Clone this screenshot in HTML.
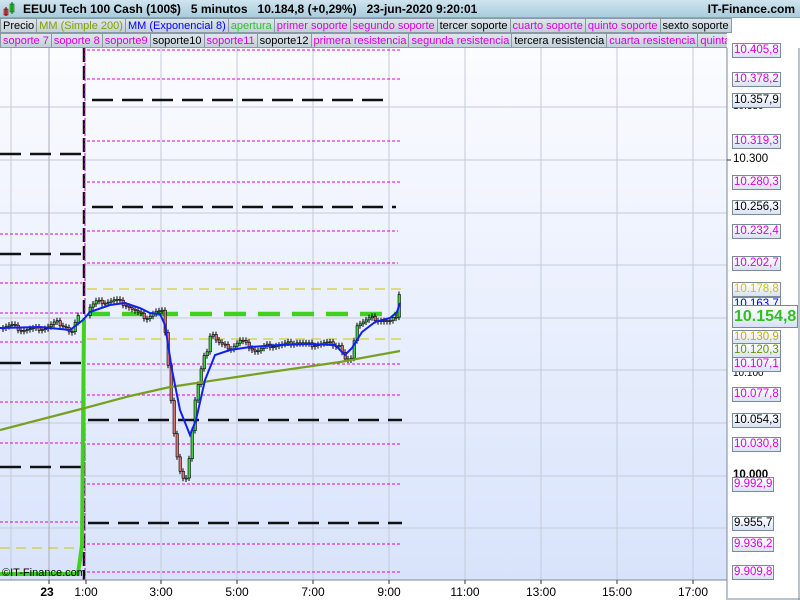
<!DOCTYPE html>
<html><head><meta charset="utf-8"><style>
*{margin:0;padding:0;box-sizing:border-box}
body{width:800px;height:600px;overflow:hidden;background:#fff;font-family:"Liberation Sans",sans-serif;position:relative}
#hdr{position:absolute;left:0;top:0;width:800px;height:18px;background:linear-gradient(#cfe4ee,#a9ccdc);border-bottom:1px solid #8aa;font-weight:bold;font-size:12px;line-height:18px}
.row{position:absolute;left:0;height:15px;display:flex;font-size:11px;line-height:14px}
.row span{background:linear-gradient(#dde6ec,#c3d0d8);border:1px solid #8a9aa4;border-left:none;padding:0 2px;white-space:nowrap}
.m{color:#e000e0}.k{color:#000}
.lab{position:absolute;left:732px;height:15px;border:1px solid #7a8a96;background:linear-gradient(#fff,#d8e2f4);font-size:11.5px;line-height:13px;padding:0 1px;white-space:nowrap}
.ax{position:absolute;font-size:11.5px}
.bt{position:absolute;top:585px;font-size:12px;transform:translateX(-50%)}
</style></head><body>
<div id="hdr"><svg style="position:absolute;left:3px;top:2px" width="14" height="14"><rect x="1" y="7" width="4" height="6" fill="#e06060" stroke="#600" stroke-width=".6"/><line x1="3" y1="5" x2="3" y2="14" stroke="#600"/><rect x="7" y="2" width="4" height="8" fill="#40d040" stroke="#060" stroke-width=".6"/><line x1="9" y1="0" x2="9" y2="12" stroke="#060"/></svg>
<span style="position:absolute;left:23px">EEUU Tech 100 Cash (100$)&nbsp;&nbsp; 5 minutos&nbsp;&nbsp; 10.184,8 (+0,29%)&nbsp;&nbsp; 23-jun-2020 9:20:01</span>
<span style="position:absolute;right:5px">IT-Finance.com</span></div>
<div class="row" style="top:18px"><span class="k" style="border-left:1px solid #8a9aa4">Precio</span><span style="color:#80a000">MM (Simple 200)</span><span style="color:#0000ff">MM (Exponencial 8)</span><span style="color:#30c030">apertura</span><span class="m">primer soporte</span><span class="m">segundo soporte</span><span class="k">tercer soporte</span><span class="m">cuarto soporte</span><span class="m">quinto soporte</span><span class="k">sexto soporte</span></div>
<div class="row" style="top:33px;width:727px;overflow:hidden"><span class="m" style="border-left:1px solid #8a9aa4">soporte 7</span><span class="m">soporte 8</span><span class="m">soporte9</span><span class="k">soporte10</span><span class="m">soporte11</span><span class="k">soporte12</span><span class="m">primera resistencia</span><span class="m">segunda resistencia</span><span class="k">tercera resistencia</span><span class="m">cuarta resistencia</span><span class="m">quinta resistencia</span></div>
<svg id="ch" style="position:absolute;left:0;top:48px" width="800" height="552" viewBox="0 48 800 552">
<defs><linearGradient id="bg" x1="0" y1="0" x2="0" y2="1"><stop offset="0" stop-color="#fbfcff"/><stop offset="1" stop-color="#d8e3fb"/></linearGradient></defs>
<rect x="0" y="48" width="727" height="532" fill="url(#bg)"/>
<g stroke="#c4cad8" stroke-width="1">
<line x1="0" y1="107" x2="727" y2="107"/><line x1="0" y1="160" x2="727" y2="160"/><line x1="0" y1="213" x2="727" y2="213"/><line x1="0" y1="265" x2="727" y2="265"/><line x1="0" y1="318" x2="727" y2="318"/><line x1="0" y1="370" x2="727" y2="370"/><line x1="0" y1="423" x2="727" y2="423"/><line x1="0" y1="476" x2="727" y2="476"/><line x1="0" y1="528" x2="727" y2="528"/>
<line x1="11" y1="48" x2="11" y2="580"/><line x1="49" y1="48" x2="49" y2="580" stroke="#aab"/><line x1="161" y1="48" x2="161" y2="580"/><line x1="237" y1="48" x2="237" y2="580"/><line x1="313" y1="48" x2="313" y2="580"/><line x1="389" y1="48" x2="389" y2="580"/><line x1="465" y1="48" x2="465" y2="580"/><line x1="541" y1="48" x2="541" y2="580"/><line x1="617" y1="48" x2="617" y2="580"/><line x1="693" y1="48" x2="693" y2="580"/>
</g>
<g stroke="#e000e0" stroke-width="1" stroke-dasharray="3,2">
<line x1="87" y1="50" x2="402" y2="50"/><line x1="87" y1="79" x2="402" y2="79"/><line x1="87" y1="141" x2="402" y2="141"/><line x1="87" y1="182" x2="402" y2="182"/><line x1="87" y1="231" x2="398" y2="231"/><line x1="87" y1="263" x2="398" y2="263"/><line x1="87" y1="364" x2="402" y2="364"/><line x1="87" y1="395" x2="402" y2="395"/><line x1="87" y1="444" x2="402" y2="444"/><line x1="87" y1="484" x2="402" y2="484"/><line x1="87" y1="544" x2="402" y2="544"/><line x1="87" y1="572" x2="402" y2="572"/>
<line x1="0" y1="234" x2="82" y2="234"/><line x1="0" y1="283" x2="82" y2="283"/><line x1="0" y1="313" x2="82" y2="313"/><line x1="0" y1="342" x2="82" y2="342"/><line x1="0" y1="402" x2="82" y2="402"/><line x1="0" y1="443" x2="82" y2="443"/><line x1="0" y1="522" x2="82" y2="522"/>
</g>
<g stroke="#c8c800" stroke-width="1" stroke-dasharray="10,6"><line x1="87" y1="289" x2="402" y2="289"/><line x1="87" y1="339" x2="402" y2="339"/><line x1="0" y1="548" x2="82" y2="548"/></g>
<g stroke="#111" stroke-width="2.5" stroke-dasharray="21,9"><line x1="92" y1="100" x2="392" y2="100"/><line x1="92" y1="207" x2="396" y2="207"/><line x1="88" y1="420" x2="402" y2="420"/><line x1="88" y1="523" x2="402" y2="523"/><line x1="0" y1="154" x2="82" y2="154"/><line x1="0" y1="254" x2="82" y2="254"/><line x1="0" y1="363" x2="82" y2="363"/><line x1="0" y1="467" x2="82" y2="467"/></g>
<line x1="84" y1="48" x2="84" y2="580" stroke="#111" stroke-width="2.5" stroke-dasharray="14,4"/>
<line x1="85" y1="48" x2="85" y2="580" stroke="#e000e0" stroke-width="1" stroke-dasharray="3,2"/>
<line x1="88" y1="314" x2="398" y2="314" stroke="#40d020" stroke-width="4.5" stroke-dasharray="22,12"/>
<polyline points="0,574 78,574 82,545 84,320" fill="none" stroke="#40d020" stroke-width="4"/>
<g id="cd"></g>
<polyline points="0,430 85,408 130,396 170,387 250,375 340,362 400,351" fill="none" stroke="#78a020" stroke-width="2.2"/>
<polyline points="0,328 40,327 70,330 83,320 90,312 110,305 125,303 140,308 150,313 160,314 165,325 172,370 180,410 190,435 196,420 205,380 215,355 230,350 250,347 280,345 310,344 335,345 345,355 352,348 362,332 375,322 390,318 397,312 400,303" fill="none" stroke="#1020f0" stroke-width="2"/>
<line x1="727" y1="48" x2="727" y2="600" stroke="#7a8a96"/>
<line x1="0" y1="580" x2="727" y2="580" stroke="#7a8a96"/>
<g stroke="#333"><line x1="49" y1="580" x2="49" y2="584"/><line x1="86" y1="580" x2="86" y2="584"/><line x1="161" y1="580" x2="161" y2="584"/><line x1="237" y1="580" x2="237" y2="584"/><line x1="313" y1="580" x2="313" y2="584"/><line x1="389" y1="580" x2="389" y2="584"/><line x1="465" y1="580" x2="465" y2="584"/><line x1="541" y1="580" x2="541" y2="584"/><line x1="617" y1="580" x2="617" y2="584"/><line x1="693" y1="580" x2="693" y2="584"/>
<line x1="727" y1="160" x2="731" y2="160"/></g>
<line x1="799" y1="48" x2="799" y2="600" stroke="#7a8a96"/>
<line x1="728" y1="599" x2="800" y2="599" stroke="#7a8a96"/>
</svg>
<div class="ax" style="left:733px;top:153px">10.300</div>
<div class="ax" style="left:733px;top:101px;font-size:10px">10.350</div>
<div class="ax" style="left:733px;top:368px;font-size:10px">10.100</div>
<div class="ax" style="left:733px;top:469px;font-weight:bold">10.000</div>
<div class="lab m" style="top:43px">10.405,8</div>
<div class="lab m" style="top:72px">10.378,2</div>
<div class="lab k" style="top:93px">10.357,9</div>
<div class="lab m" style="top:134px">10.319,3</div>
<div class="lab m" style="top:175px">10.280,3</div>
<div class="lab k" style="top:200px">10.256,3</div>
<div class="lab m" style="top:224px">10.232,4</div>
<div class="lab m" style="top:256px">10.202,7</div>
<div class="lab" style="top:282px;color:#c8c800">10.178,8</div>
<div class="lab" style="top:297px;color:#0000f0">10.163,7</div>
<div class="lab" style="top:330px;color:#c0b000">10.130,9</div>
<div class="lab" style="top:343px;color:#6a9000">10.120,3</div>
<div class="lab m" style="top:357px">10.107,1</div>
<div class="lab" style="left:732px;top:305px;width:66px;height:23px;font-size:16px;line-height:21px;font-weight:bold;color:#30c020">10.154,8</div>
<div class="lab m" style="top:387px">10.077,8</div>
<div class="lab k" style="top:413px">10.054,3</div>
<div class="lab m" style="top:437px">10.030,8</div>
<div class="lab m" style="top:477px">9.992,9</div>
<div class="lab k" style="top:516px">9.955,7</div>
<div class="lab m" style="top:537px">9.936,2</div>
<div class="lab m" style="top:565px">9.909,8</div>
<div style="position:absolute;left:2px;top:567px;font-size:11px">©IT-Finance.com</div>
<div class="bt" style="left:47px;font-weight:bold">23</div>
<div class="bt" style="left:86px">1:00</div><div class="bt" style="left:161px">3:00</div><div class="bt" style="left:237px">5:00</div><div class="bt" style="left:313px">7:00</div><div class="bt" style="left:389px">9:00</div><div class="bt" style="left:465px">11:00</div><div class="bt" style="left:541px">13:00</div><div class="bt" style="left:617px">15:00</div><div class="bt" style="left:693px">17:00</div>
<script>
var K=[[0,328],[10,325],[20,330],[45,328],[55,322],[65,327],[70,335],[76,318],[80,315],[88,308],[95,302],[105,302],[115,300],[125,305],[135,312],[145,318],[155,312],[162,312],[165,340],[170,400],[174,445],[178,470],[182,480],[186,475],[190,440],[194,400],[198,380],[202,360],[206,350],[210,330],[215,340],[220,345],[230,348],[240,340],[255,352],[265,346],[280,345],[295,342],[310,345],[325,343],[338,345],[345,362],[350,360],[355,325],[362,322],[370,318],[380,320],[390,322],[396,314],[399,283]];
function yAt(x){for(var i=1;i<K.length;i++){if(x<=K[i][0]){var a=K[i-1],b=K[i];return a[1]+(b[1]-a[1])*(x-a[0])/(b[0]-a[0]);}}return 283;}
var s='',prev=yAt(0);
for(var x=2;x<=399;x+=3){if(x>79&&x<87)continue;var c=yAt(x)+((x*37)%7-3)*0.6;var o=prev;var t=Math.min(o,c),b=Math.max(o,c);if(b-t<1)b=t+1;var col=c<o?'#40d040':'#e07070';
s+='<line x1="'+(x+1)+'" y1="'+(t-3)+'" x2="'+(x+1)+'" y2="'+(b+3)+'" stroke="#000" stroke-width="1"/><rect x="'+x+'" y="'+t+'" width="2.5" height="'+(b-t)+'" fill="'+col+'" stroke="#000" stroke-width="0.6"/>';prev=c;}
document.getElementById('cd').innerHTML=s;
</script>
</body></html>
